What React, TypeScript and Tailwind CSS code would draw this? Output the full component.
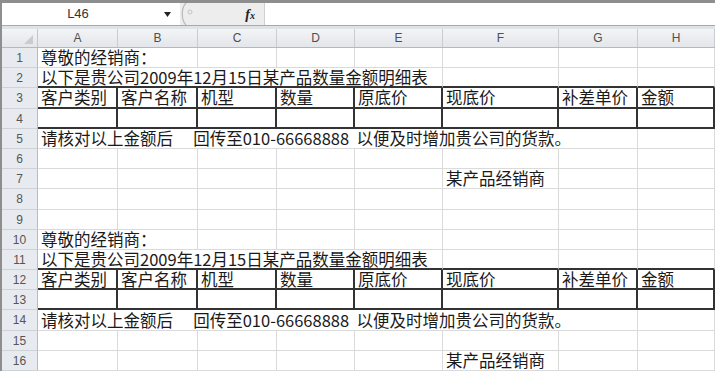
import React from 'react';

const cols = ['A', 'B', 'C', 'D', 'E', 'F', 'G', 'H'];
const widths = [80, 80, 79, 78, 88, 116, 79, 77];

type Kind = 'plain' | 'topline' | 'table';
type Seg = { span: number; text?: string };
type Row = { n: number; h: number; kind: Kind; segs: Seg[] };

const single = (from: number, to: number): Seg[] => widths.slice(from, to).map(() => ({ span: 1 }));

function block(start: number): Row[] {
  const heights = start === 1 ? [20, 20, 21, 20, 20, 20, 20, 21, 20] : [20, 20, 20, 20, 21, 20, 20];
  return [
    { n: start, h: heights[0], kind: 'plain', segs: [{ span: 2, text: '尊敬的经销商：' }, ...single(2, 8)] },
    {
      n: start + 1,
      h: heights[1],
      kind: 'topline',
      segs: [{ span: 5, text: '以下是贵公司2009年12月15日某产品数量金额明细表' }, ...single(5, 8)]
    },
    {
      n: start + 2,
      h: heights[2],
      kind: 'table',
      segs: ['客户类别', '客户名称', '机型', '数量', '原底价', '现底价', '补差单价', '金额'].map((text) => ({ span: 1, text }))
    },
    { n: start + 3, h: heights[3], kind: 'table', segs: single(0, 8) },
    {
      n: start + 4,
      h: heights[4],
      kind: 'plain',
      segs: [{ span: 7, text: '请核对以上金额后　 回传至010-66668888  以便及时增加贵公司的货款。' }, ...single(7, 8)]
    },
    { n: start + 5, h: heights[5], kind: 'plain', segs: single(0, 8) },
    {
      n: start + 6,
      h: heights[6],
      kind: 'plain',
      segs: [...single(0, 5), { span: 1, text: '某产品经销商' }, ...single(6, 8)]
    }
  ];
}

const rows: Row[] = [
  ...block(1),
  { n: 8, h: 21, kind: 'plain', segs: single(0, 8) },
  { n: 9, h: 20, kind: 'plain', segs: single(0, 8) },
  ...block(10)
];

function cellClass(kind: Kind) {
  if (kind === 'table') return 'border-r-2 border-b-2 border-[#333]';
  if (kind === 'topline') return 'border-r border-b-2 border-r-[#dadada] border-b-[#333]';
  return 'border-r border-b border-[#dadada]';
}

function Sheet() {
  let col = 0;

  return (
    <div className="flex flex-col">
      {rows.map((row) => {
        col = 0;
        return (
          <div key={row.n} className="flex" style={{ height: row.h }}>
            <div className="flex w-[36px] shrink-0 items-center justify-center border-r border-b border-r-[#b8bcc2] border-b-[#cfd3d8] bg-[#e7ebf0] font-['Liberation_Sans'] text-[12px] leading-[16px] text-[#555]">
              {row.n}
            </div>
            {row.segs.map((seg, i) => {
              const w = widths.slice(col, col + seg.span).reduce((a, b) => a + b, 0);
              col += seg.span;
              return (
                <div
                  key={i}
                  className={`flex shrink-0 items-center overflow-visible whitespace-pre pl-[3px] text-[16.5px] leading-[17px] text-[#1a1a1a] ${cellClass(row.kind)}`}
                  style={{ width: w }}
                >
                  {seg.text}
                </div>
              );
            })}
          </div>
        );
      })}
    </div>
  );
}

function FormulaBar() {
  return (
    <div className="flex h-[23px] shrink-0 border-b border-[#a9a9a9] bg-white">
      <div className="flex w-[152px] items-center justify-center font-['Liberation_Sans'] text-[13px] text-[#333]">L46</div>
      <div className="flex w-[26px] items-center justify-center">
        <svg width="7" height="5" viewBox="0 0 7 5">
          <path d="M0 0h7L3.5 5z" fill="#222" />
        </svg>
      </div>
      <div className="relative flex w-[84px] items-center justify-end bg-[#ededed] pr-[9px]">
        <svg className="absolute top-0 left-0" width="14" height="22" viewBox="0 0 14 22">
          <path d="M6 0C1 5 1 17 6 22" stroke="#b9b9b9" strokeWidth="1.2" fill="none" />
          <circle cx="10" cy="9" r="2" stroke="#c4c4c4" strokeWidth="1" fill="none" />
        </svg>
        <span className="font-['Liberation_Serif'] text-[14px] font-bold text-[#222] italic">
          f<span className="text-[10px]">x</span>
        </span>
      </div>
      <div className="flex-1 border-l border-[#d2d2d2] bg-white" />
    </div>
  );
}

function ColumnHeader() {
  return (
    <div className="flex h-[19px] shrink-0 border-b border-[#b5b9be] bg-gradient-to-b from-[#f3f4f6] to-[#e3e6ea]">
      <div className="relative w-[36px] shrink-0 border-r border-[#c3c6ca]">
        <svg className="absolute right-[4px] bottom-[3px]" width="9" height="9" viewBox="0 0 9 9">
          <path d="M9 0v9H0z" fill="#c9cccf" />
        </svg>
      </div>
      {cols.map((c, i) => (
        <div
          key={c}
          className="flex shrink-0 items-center justify-center border-r border-[#c9ccd0] font-['Liberation_Sans'] text-[12px] leading-[16px] text-[#4f4f4f]"
          style={{ width: widths[i] }}
        >
          {c}
        </div>
      ))}
    </div>
  );
}

export default function App() {
  return (
    <div className="flex h-[371px] w-[715px] flex-col overflow-hidden border-t-[3px] border-l-2 border-[#8e8e8e] bg-white font-['Noto_Sans_CJK_SC',sans-serif]">
      <FormulaBar />
      <div className="h-[3px] shrink-0 bg-[#dfe2e6]" />
      <ColumnHeader />
      <Sheet />
    </div>
  );
}
